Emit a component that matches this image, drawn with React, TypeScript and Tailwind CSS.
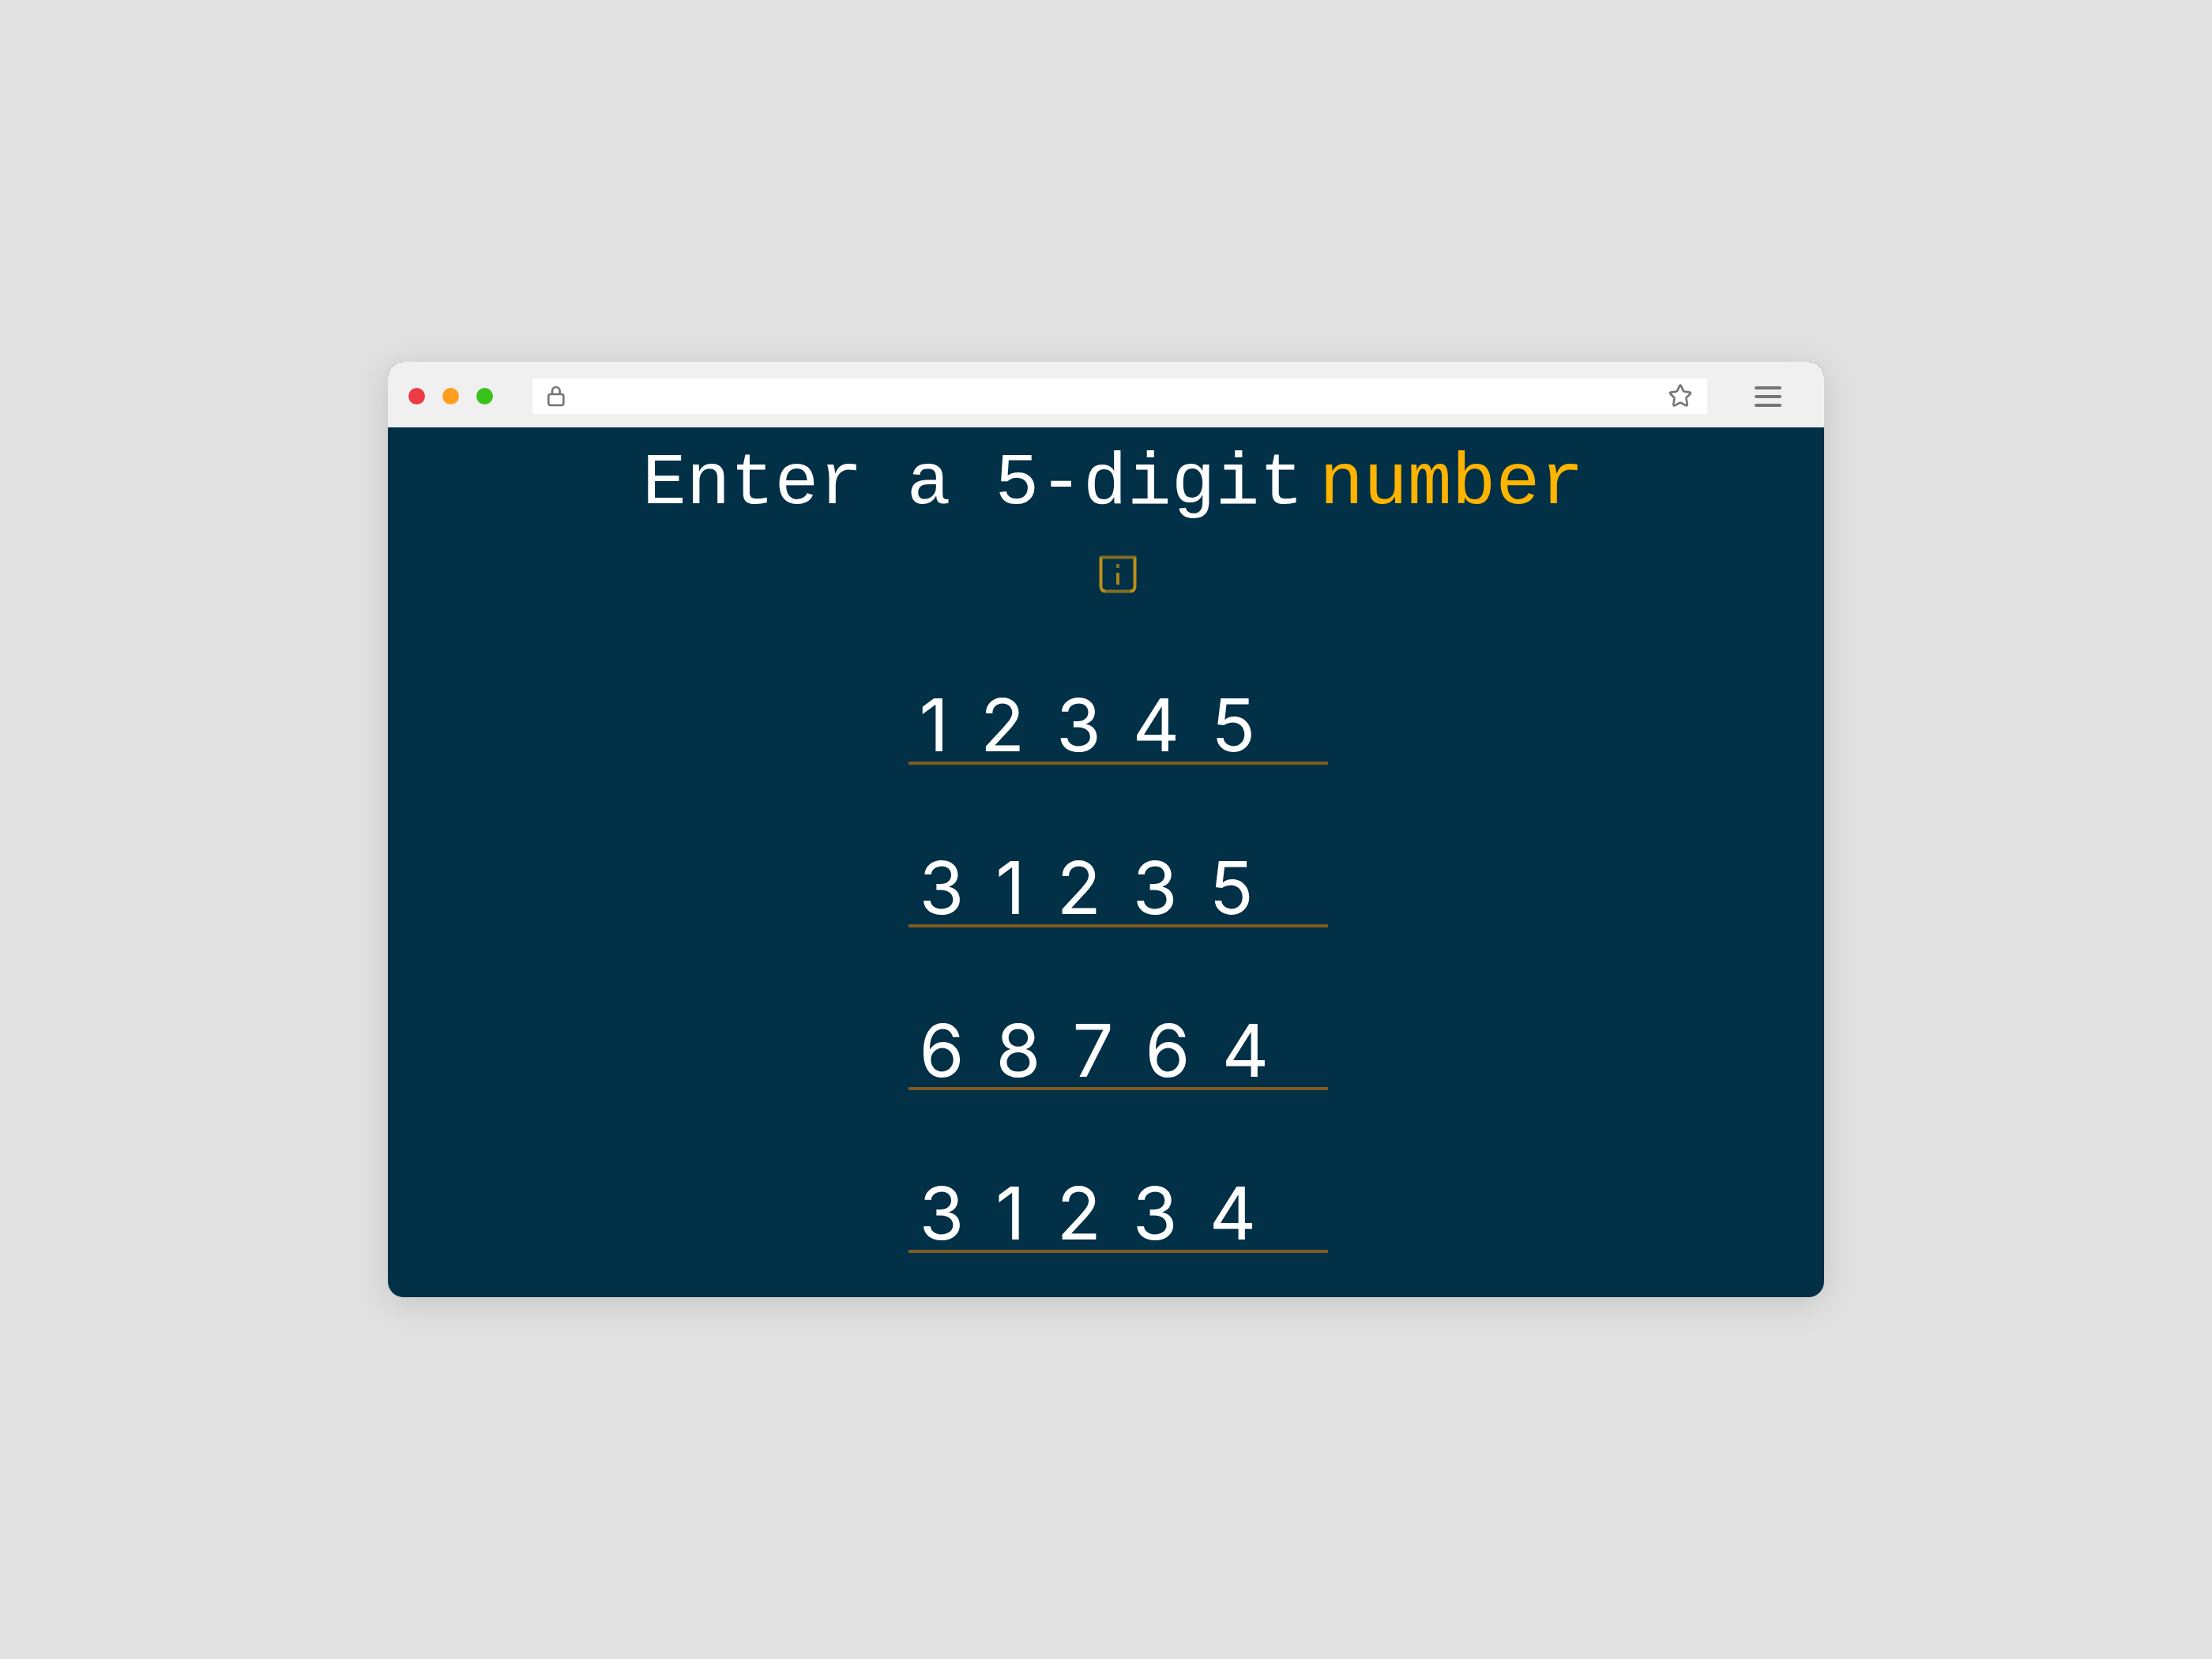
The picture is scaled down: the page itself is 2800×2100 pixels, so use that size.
import React from "react";

const ROWS = ["12345", "31235", "68764", "31234"];

function LockIcon() {
  return (
    <svg width="24" height="28" viewBox="0 0 24 28" fill="none" stroke="#757575" strokeWidth="2.6" strokeLinejoin="round" aria-hidden="true">
      <rect x="2.3" y="12" width="19" height="14" rx="2.5" />
      <path d="M7 12V8a4.8 5 0 0 1 9.6 0v4" />
    </svg>
  );
}

function StarIcon() {
  return (
    <svg width="32" height="32" viewBox="0 0 32 32" fill="none" stroke="#757575" strokeWidth="2.6" strokeLinejoin="round" aria-hidden="true">
      <path d="M15 3.6Q16 1.7 17 3.6L19.8 9.6Q20.1 10.4 21 10.6L27.7 11.6Q29.9 12.1 28.4 13.7L24 18Q23.4 18.6 23.5 19.5L24.7 26.6Q24.9 29 22.8 28.1L17 25Q16 24.5 15 25L9.2 28.1Q7.1 29 7.3 26.6L8.5 19.5Q8.6 18.6 8 18L3.6 13.7Q2.1 12.1 4.3 11.6L11 10.6Q11.9 10.4 12.2 9.6Z" />
    </svg>
  );
}

function MenuIcon() {
  return (
    <svg width="34" height="28" viewBox="0 0 34 28" stroke="#757575" strokeWidth="4" strokeLinecap="round" aria-hidden="true">
      <path d="M2 4H32M2 15H32M2 26H32" />
    </svg>
  );
}

function InfoIcon() {
  return (
    <svg width="48" height="48" viewBox="0 0 48 48" fill="none" aria-hidden="true">
      <path d="M2.5 2.5H45.5" stroke="#836f22" strokeWidth="4" strokeLinecap="round" />
      <path d="M7 45.5H41" stroke="#836f22" strokeWidth="4" />
      <path d="M2.5 3V39Q2.5 45 8 45.5M45.5 3V39Q45.5 45 40 45.5" stroke="#bb9015" strokeWidth="4" />
      <path d="M24 11V16" stroke="#836f22" strokeWidth="4" />
      <path d="M24 22V37" stroke="#aa8419" strokeWidth="4" />
    </svg>
  );
}

function BrowserBar() {
  return (
    <header className="flex h-[83px] items-center bg-[#f0f0f0] pt-[3px] pr-[54px] pl-[26px]">
      <div className="flex gap-[22px]">
        <button type="button" aria-label="Close" className="size-[21px] rounded-full bg-[#ec3b45]" />
        <button type="button" aria-label="Minimize" className="size-[21px] rounded-full bg-[#ff9f20]" />
        <button type="button" aria-label="Maximize" className="size-[21px] rounded-full bg-[#39c31a]" />
      </div>
      <div className="ml-[50px] flex h-[45px] flex-1 items-center bg-white px-[18px]">
        <LockIcon />
        <input type="text" aria-label="Address" className="mx-3 min-w-0 flex-1 bg-transparent text-2xl outline-none" />
        <button type="button" aria-label="Bookmark">
          <StarIcon />
        </button>
      </div>
      <button type="button" aria-label="Menu" className="ml-[60px]">
        <MenuIcon />
      </button>
    </header>
  );
}

function NumberRow({ digits, row }: { digits: string; row: number }) {
  return (
    <div role="group" aria-label={`Guess ${row}`} className="flex h-[92px] w-[531px] gap-10 border-b-4 border-[#805c22] pl-[14px]">
      {digits.split("").map((digit, i) => (
        <input
          key={i}
          type="text"
          inputMode="numeric"
          maxLength={1}
          defaultValue={digit}
          aria-label={`Guess ${row}, digit ${i + 1}`}
          className="field-sizing-content h-[82px] bg-transparent font-['Inter',sans-serif] text-[92px] leading-[82px] text-white outline-none"
        />
      ))}
    </div>
  );
}

export default function App() {
  return (
    <div className="flex min-h-screen items-center justify-center bg-[#e1e1e1]">
      <div className="w-full max-w-[1818px] overflow-hidden rounded-[20px] bg-[#023047] shadow-[0_8px_40px_rgba(0,0,0,0.13)]">
        <BrowserBar />
        <main className="flex flex-col items-center pt-5 pb-14 pl-[30px]">
          <h1 className="flex gap-5 pr-3 font-['Liberation_Mono',monospace] text-[93px] leading-[104px] text-white">
            <span>Enter a 5-digit</span>
            <span className="text-[#ffb400]">number</span>
          </h1>
          <button type="button" aria-label="How to play" className="mt-[38px]">
            <InfoIcon />
          </button>
          <form className="mt-[125px] flex flex-col gap-[114px]">
            {ROWS.map((digits, i) => (
              <NumberRow key={i} digits={digits} row={i + 1} />
            ))}
          </form>
        </main>
      </div>
    </div>
  );
}
